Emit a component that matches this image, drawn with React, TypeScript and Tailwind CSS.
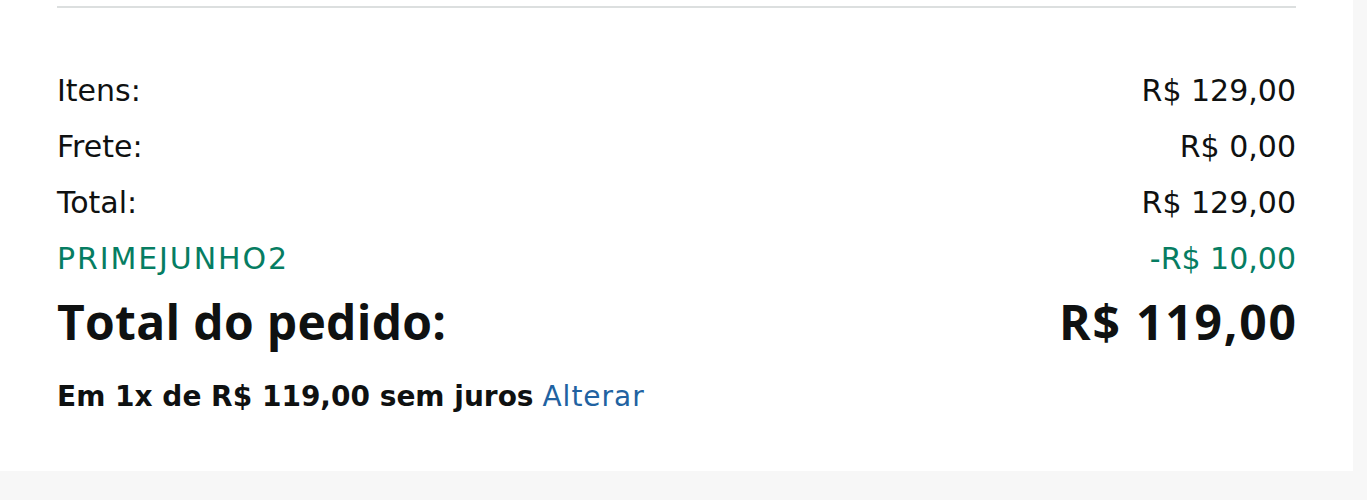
import React from "react";

type Line = { label: string; value: string; tone?: "default" | "promo" };

const lines: Line[] = [
  { label: "Itens:", value: "R$ 129,00" },
  { label: "Frete:", value: "R$ 0,00" },
  { label: "Total:", value: "R$ 129,00" },
  { label: "PRIMEJUNHO2", value: "-R$ 10,00", tone: "promo" },
];

const bodyFont = { fontFamily: '"DejaVu Sans", Verdana, sans-serif' };
const headFont = { fontFamily: '"Open Sans", "Noto Sans", Arial, sans-serif' };

export default function App() {
  return (
    <div className="min-h-[500px] w-full bg-[#f7f7f7] text-[#0f1111]" style={bodyFont}>
      <div className="w-[1353px] h-[471px] bg-white px-[57px] pt-[6px]">
        <div className="h-[2px] bg-[#dcdfdf]" />

        <div className="mt-[55px]">
          {lines.map((l) => (
            <div
              key={l.label}
              className={`flex justify-between text-[30px] leading-[56px] ${
                l.tone === "promo" ? "text-[#067d62]" : "text-[#0f1111]"
              }`}
            >
              <span className={l.tone === "promo" ? "tracking-[1.9px]" : ""}>{l.label}</span>
              <span>{l.value}</span>
            </div>
          ))}
        </div>

        <div
          className="mt-[7px] flex justify-between text-[48px] leading-[56px] font-bold"
          style={headFont}
        >
          <span className="tracking-[0.3px]">Total do pedido:</span>
          <span className="tracking-[1.8px] -mr-[1.8px]">R$ 119,00</span>
        </div>

        <div className="mt-[27px] text-[28px] leading-[40px]">
          <span className="font-bold">Em 1x de R$ 119,00 sem juros</span>{" "}
          <a className="text-[#2162a1] tracking-[1px] cursor-pointer">Alterar</a>
        </div>
      </div>
    </div>
  );
}
